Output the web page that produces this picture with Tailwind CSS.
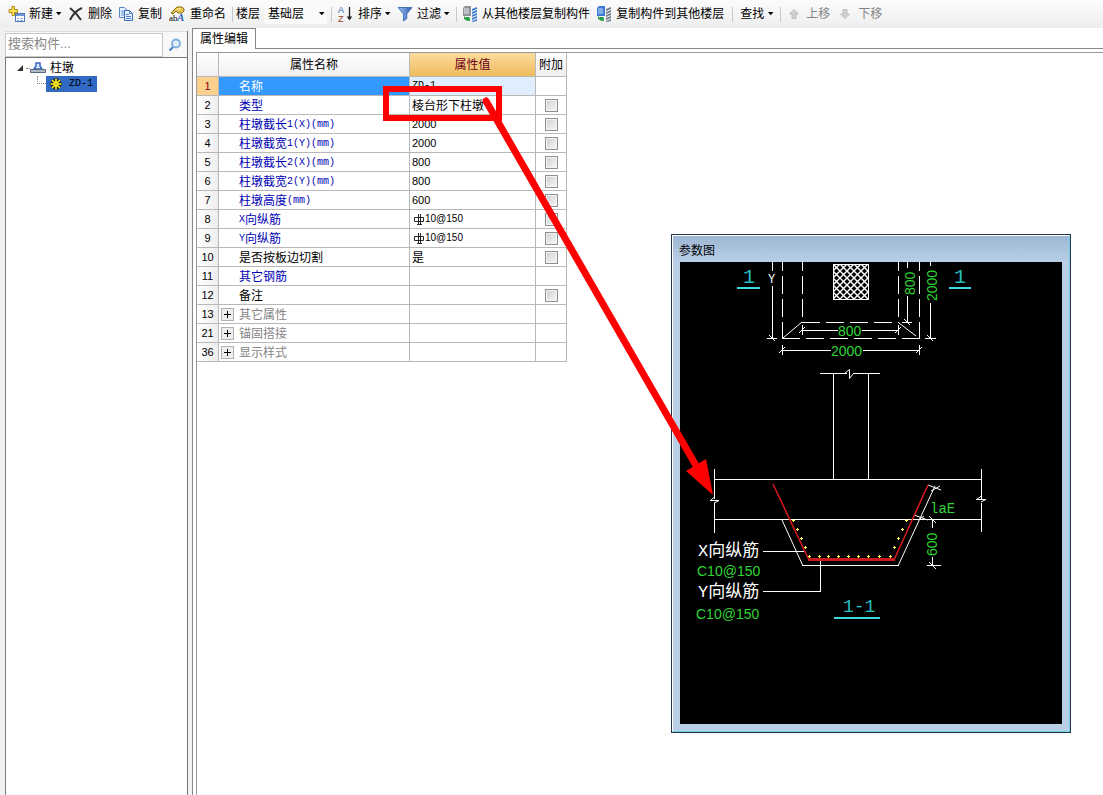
<!DOCTYPE html>
<html lang="zh-CN">
<head>
<meta charset="utf-8">
<title>属性编辑</title>
<script src="https://cdn.jsdelivr.net/npm/@tailwindcss/browser@4"></script>
</head>
<body class="relative flex h-screen flex-col overflow-hidden bg-[#f1f1f1] font-['Liberation_Sans','Noto_Sans_CJK_SC',sans-serif] text-[12px] leading-4 text-black">

<!-- Toolbar -->
<header class="flex h-7 shrink-0 items-center whitespace-nowrap bg-linear-to-b from-[#fcfcfc] to-[#eeeeee] pl-2">
  <button class="flex items-center">
    <svg class="mr-1 size-[17px]" viewBox="0 0 17 17"><rect x="7.500" y="7.500" width="9" height="8" fill="#fff" stroke="#5277b8"/><path d="M8 8h8v2H8z" fill="#6d94d8"/><path d="M9 12h2v1H9zM12 12h3v1h-3zM9 14h2v1H9zM12 14h3v1h-3z" fill="#8fb0e0"/><path d="M4 .5h2.500v3h3v3h-3v3H4v-3H1v-3h3z" fill="#ffe25a" stroke="#ad8b18"/></svg>
    新建
    <svg class="ml-0.5 h-1 w-[7px]" viewBox="0 0 7 4"><path d="M1 0h5.500L3.700 3.200z"/></svg>
  </button>
  <button class="ml-1.5 flex items-center"><svg class="mr-1 size-4" viewBox="0 0 16 16"><path d="M2 2c4 3 8 7 11 12M14 2C9 4 5 8 2 14" fill="none" stroke="#333" stroke-width="2"/></svg>删除</button>
  <button class="ml-1.5 flex items-center"><svg class="mr-1 size-4" viewBox="0 0 16 16"><path d="M1.500 1.500h5l3 3v7h-8z" fill="#e8f1ff" stroke="#5a86ca"/><path d="M3 5h4M3 7h3M3 9h3" stroke="#6b9ade"/><path d="M6.500 4.500h5l3 3v7h-8z" fill="#e4efff" stroke="#3e6cb8"/><path d="M11.500 4.500v3h3M8 8.500h3M8 10.500h5M8 12.500h5" fill="none" stroke="#4f83d0"/></svg>复制</button>
  <button class="ml-[7px] flex items-center"><svg class="mr-1 size-[17px] overflow-visible" viewBox="0 0 17 17"><path d="M5 4l3-3h5l2 2v2l-2 2H9L7 5 4 8 2 7z" fill="#e6c24e" stroke="#8e6b14"/><path d="M8 3h4" stroke="#fff2a8"/><g font-family="Liberation Serif"><text x="0" y="15" font-size="9">ab</text><text x="8" y="15" font-size="11" font-style="italic" font-weight="bold" fill="#2865b8">A</text></g></svg>重命名</button>
  <i class="ml-1.5 mr-[3px] h-[15px] w-px bg-[#c7c7c7]"></i>
  <label for="floor">楼层</label>
  <div class="relative ml-1 mr-1 flex h-5 items-center bg-[#fafafa]">
    <select id="floor" class="h-5 w-[63px] appearance-none bg-transparent pl-1"><option>基础层</option></select>
    <svg class="pointer-events-none absolute right-0.5 top-2 h-1 w-[7px]" viewBox="0 0 7 4"><path d="M1 0h5.500L3.700 3.200z"/></svg>
  </div>
  <i class="mr-[5px] h-[15px] w-px bg-[#c7c7c7]"></i>
  <button class="flex items-center">
    <svg class="mr-1 h-[18px] w-[17px]" viewBox="0 0 17 18"><g font-family="Liberation Sans" font-size="9"><text x="1" y="8" fill="#2869b5">A</text><text x="1" y="17" fill="#9a3a2c">Z</text></g><path d="M12.500 2v12" stroke="#222" stroke-width="1.300"/><path d="M9.800 11.500h5.400l-2.700 4z" fill="#222"/></svg>
    排序<svg class="ml-0.5 h-1 w-[7px]" viewBox="0 0 7 4"><path d="M1 0h5.500L3.700 3.200z"/></svg>
  </button>
  <button class="ml-1.5 flex items-center">
    <svg class="mr-1 size-4" viewBox="0 0 16 16"><defs><linearGradient id="fn"><stop stop-color="#9cc6f4"/><stop offset="1" stop-color="#2c5cae"/></linearGradient></defs><path d="M1 1.500h14L9.800 8v4.500L6.500 15V8z" fill="url(#fn)" stroke="#4674bd"/></svg>
    过滤<svg class="ml-0.5 h-1 w-[7px]" viewBox="0 0 7 4"><path d="M1 0h5.500L3.700 3.200z"/></svg>
  </button>
  <i class="ml-1.5 mr-[5px] h-[15px] w-px bg-[#c7c7c7]"></i>
  <button class="flex items-center"><svg class="mr-1 size-4" viewBox="0 0 16 16"><path d="M1 2l2-2h6v10H1z" fill="#8c9399"/><path d="M2 3h5M2 5h5M2 7h5" stroke="#e9edf0"/><path d="M10 3l5-2v2l-5 2zM10 6l5-2v2l-5 2zM10 9l5-2v2l-5 2zM10 12l5-2v2l-5 2zM10 15l5-2v2l-5 1z" fill="#3e7fd0"/><path d="M2 10l2 2v-1h3v3H4l-2-1z" fill="#229a42"/><path d="M4 15l4-4v4z" fill="#2eb050"/></svg>从其他楼层复制构件</button>
  <button class="ml-1.5 flex items-center"><svg class="mr-1 size-4" viewBox="0 0 16 16"><path d="M1 2l2-2h6v10H1z" fill="#3e79d0"/><path d="M2 3h5M2 5h5M2 7h5" stroke="#c9e0fa"/><path d="M10 3l5-2v2l-5 2zM10 6l5-2v2l-5 2zM10 9l5-2v2l-5 2zM10 12l5-2v2l-5 2zM10 15l5-2v2l-5 1z" fill="#727d88"/><path d="M2 10l2 2v-1h3v3H4l-2-1z" fill="#229a42"/><path d="M4 15l4-4v4z" fill="#2eb050"/></svg>复制构件到其他楼层</button>
  <i class="ml-2 mr-[7px] h-[15px] w-px bg-[#c7c7c7]"></i>
  <button class="flex items-center">查找<svg class="ml-[3px] h-1 w-[7px]" viewBox="0 0 7 4"><path d="M1 0h5.500L3.700 3.200z"/></svg></button>
  <i class="ml-1.5 mr-2 h-[15px] w-px bg-[#c7c7c7]"></i>
  <button class="flex items-center text-[#858585]"><svg class="mr-[7px] size-2.5" viewBox="0 0 10 10"><path d="M5 .5L9.500 5H7v4.500H3V5H.5z" fill="#d0d0d0" stroke="#bdbdbd"/></svg>上移</button>
  <button class="ml-2.5 flex items-center text-[#858585]"><svg class="mr-2 size-2.5" viewBox="0 0 10 10"><path d="M5 9.500L.5 5H3V.5h4V5h2.500z" fill="#d0d0d0" stroke="#bdbdbd"/></svg>下移</button>
</header>

<main class="flex min-h-0 flex-1">
  <!-- Component tree -->
  <aside class="ml-[5px] mt-[3px] flex w-[183px] shrink-0 flex-col border-r border-[#777] bg-white">
    <div class="flex h-[26px] items-center border-t border-[#ddd] bg-[#f8f8f8]">
      <input aria-label="搜索构件" placeholder="搜索构件..." class="h-6 w-[158px] border border-[#c8c8c8] bg-white px-0.5 pb-0.5 text-[13px] placeholder:text-[#888]">
      <button aria-label="搜索" class="flex flex-1 justify-center"><svg class="size-4" viewBox="0 0 16 16"><circle cx="9" cy="6.500" r="4" fill="#dceffd" stroke="#7eaddb" stroke-width="1.800"/><path d="M6 10l-3.500 3.500" stroke="#4d80c2" stroke-width="2.200"/></svg></button>
    </div>
    <ul class="flex-1 border-l border-t border-[#777] pt-0.5">
      <li class="flex h-4 items-center pl-2.5">
        <svg class="size-2" viewBox="0 0 8 8"><path d="M7 1v6H1z" fill="#333"/></svg>
        <i class="ml-0.5 w-1 border-t border-dotted border-[#888]"></i>
        <svg class="mr-1 h-3 w-4" viewBox="0 0 16 12"><path d="M6 1h4v3l2 3H4l2-3z" fill="#dbe8ff" stroke="#356bc4" stroke-width="1.500"/><path d="M.5 7.500h15v3H.5z" fill="#aebac8" stroke="#59697d"/></svg>
        柱墩
      </li>
      <li class="flex h-4 items-stretch pl-[31px]">
        <i class="mb-2 w-[9px] border-b border-l border-dotted border-[#888]"></i>
        <span class="flex items-center bg-[#316ac5] pl-1 pr-1 font-['Liberation_Mono',monospace] text-[10px]">
          <svg class="mr-[7px] size-3" viewBox="0 0 12 12"><path d="M6 0v12M0 6h12M2 2l8 8M10 2l-8 8" stroke="#111" stroke-width="3"/><path d="M6 .5v11M.5 6h11M2 2l8 8M10 2l-8 8" stroke="#ffee22" stroke-width="1.700"/><circle cx="6" cy="6" r="2.500" fill="#ffee22"/><path d="M5.500 5.500h1v1h-1z" fill="#333"/></svg>ZD-1
        </span>
      </li>
    </ul>
  </aside>

  <!-- Property editor -->
  <section class="ml-1 flex min-w-0 flex-1 flex-col border-l border-[#888] bg-white">
    <div role="tablist" class="flex h-[21px] shrink-0">
      <button role="tab" aria-selected="true" class="border-r border-t border-[#888] px-[7px]">属性编辑</button>
      <div class="flex-1 border-b border-[#888]"></div>
    </div>
    <div class="ml-[3px] mt-[3px] flex-1 border-l border-t border-[#999]">
      <table class="table-fixed border-separate border-spacing-0 text-[12px] leading-4">
        <colgroup><col class="w-[22px]"><col class="w-[191px]"><col class="w-[126px]"><col class="w-[31px]"></colgroup>
        <thead>
          <tr class="h-6 bg-linear-to-b from-white to-[#efefef] [&>th]:border-b [&>th]:border-r [&>th]:border-[#b8b8b8] [&>th]:p-0 [&>th]:font-normal">
            <th></th><th>属性名称</th><th class="bg-linear-to-b from-[#fbdc9c] to-[#efbb5c] text-[#6b0020]">属性值</th><th>附加</th>
          </tr>
        </thead>
        <tbody id="rows"></tbody>
      </table>
    </div>
  </section>
</main>

<!-- Parameter drawing window -->
<div role="dialog" aria-label="参数图" class="absolute left-[671px] top-[234px] flex w-[400px] flex-col border border-[#263448] bg-[#b9cfe6]">
  <div class="flex flex-col border border-l-white border-t-white border-b-[#6fd3e8] border-r-[#6fd3e8] px-[7px] pb-[7px]">
    <h2 class="-mx-[7px] flex h-[26px] items-center bg-linear-to-b from-[#9db6d3] to-[#b9cfe8] px-[6px] pt-1">参数图</h2>
    <svg class="block h-[462px] w-[382px] bg-black" viewBox="680 262 382 462" shape-rendering="crispEdges" font-family="'Liberation Sans','Noto Sans CJK SC',sans-serif">
      <defs>
        <pattern id="hatch" x="833" y="264" width="7" height="7" patternUnits="userSpaceOnUse"><path d="M0 0l7 7M7 0L0 7" stroke="#fff" stroke-width="1.400" shape-rendering="auto"/></pattern>
        <marker id="bar" markerUnits="userSpaceOnUse" markerWidth="3" markerHeight="3" refX="1.500" refY="1.500"><path d="M1 0h1v1h1v1H2v1H1V2H0V1h1z" fill="#ffff45"/></marker>
      </defs>
      <g fill="none" stroke="#fff">
        <rect x="833.500" y="264.500" width="35" height="35" fill="url(#hatch)"/>
        <path d="M782.500 262v76M919.500 262v76M802.500 262v60M898.500 262v60" stroke-dasharray="18 5" stroke-dashoffset="9"/>
        <path d="M782 338.500h138M802 322.500h97" stroke-dasharray="18 6"/>
        <path d="M783 338l19-16M899 323l17 13" shape-rendering="auto"/>
        <path d="M772.500 262v9M772.500 286v52M767 338.500h10M907.500 262v6M907.500 296v26M902 322.500h10M930.500 262v4M930.500 303v35M925 338.500h11"/>
        <path d="M802 330.500h36M862 330.500h37M802.500 325v10M898.500 325v10M782 350.500h49M863 350.500h57M782.500 345v10M919.500 345v10"/>
        <path d="M769 335l6 6M904 319l6 6M927 335l6 6M799 333l6-6M895 333l6-6M779 353l6-6M916 353l6-6" shape-rendering="auto"/>
        <path d="M820 373.500h27M853 373.500h27M833.500 374v105M868.500 374v105M714 479.500h268M714 519.500h268M714.500 469v30M714.500 503v30M981.500 469v30M981.500 503v29"/>
        <path d="M844.500 373.500l5-4v9l4-5M710 500.500h9l-5 2.500M714.500 497l-4 3.500M976 499.500h10l-5 2.500M981.500 496l-5 3.500M782 520l21 46M898 566l37-80M928 485l13 5M931 491l9-5M914 515l14 5M918 520l6-4" shape-rendering="auto"/>
        <path d="M802 565.500h97M932.500 519v9M932.500 557v9M927 565.500h14M763 551.500h41M763 591.500h57.500V558"/>
        <path d="M929 516l7 7M929 562l7 7" shape-rendering="auto"/>
      </g>
      <path d="M773 484l35 74 1 2h85l34-75" fill="none" stroke="#d9191d" stroke-width="1.500" shape-rendering="auto"/>
      <path d="M808 559.500h87" stroke="#c9191d" stroke-width="3"/>
      <polyline fill="none" stroke="none" marker-start="url(#bar)" marker-mid="url(#bar)" marker-end="url(#bar)" points="793.500,520.500 797.500,529.500 801.500,538.500 805.500,547.500 809.500,556.500 819.500,556.500 828.500,556.500 838.500,556.500 848.500,556.500 858.500,556.500 868.500,556.500 879.500,556.500 890.500,556.500 894.500,547.500 898.500,538.500 902.500,529.500 906.500,520.500"/>
      <path d="M737 288h23M949 288h22M834 618h46" stroke="#3fd8dc" stroke-width="2"/>
      <g fill="#25bfc0" font-family="'Liberation Mono',monospace" font-size="20"><text x="743" y="283">1</text><text x="954" y="283">1</text><text x="843" y="612" font-size="18">1-1</text></g>
      <g fill="#2fd534" font-size="14">
        <text x="838" y="336">800</text><text x="831" y="356">2000</text>
        <text x="697" y="576">C10@150</text><text x="696" y="619">C10@150</text>
        <text x="930" y="513" font-family="'Liberation Mono',monospace">laE</text>
        <text transform="translate(915 295) rotate(-90)">800</text>
        <text transform="translate(937 301) rotate(-90)">2000</text>
        <text transform="translate(937 556) rotate(-90)">600</text>
      </g>
      <g fill="#fff" font-size="17"><text x="698" y="556"><tspan font-family="'Liberation Mono',monospace">X</tspan>向纵筋</text><text x="698" y="597"><tspan font-family="'Liberation Mono',monospace">Y</tspan>向纵筋</text><text x="768" y="283" font-size="12" font-family="'Liberation Mono',monospace">Y</text></g>
    </svg>
  </div>
</div>

<!-- Callout from the type field to the drawing -->
<svg class="pointer-events-none absolute left-0 top-0 h-[795px] w-[1103px]" viewBox="0 0 1103 795" aria-hidden="true">
  <rect x="386" y="89" width="113" height="29" fill="none" stroke="#f00" stroke-width="6"/>
  <path d="M486 101L698 469" stroke="#f00" stroke-width="7" stroke-linecap="round"/>
  <path d="M713 495l-27-24 20-12z" fill="#f00"/>
</svg>

<script>
const rows = [
  [1,'名称','','ZD-1',0],[2,'类型','','棱台形下柱墩',1],[3,'柱墩截长','1(X)(mm)','2000',1],[4,'柱墩截宽','1(Y)(mm)','2000',1],
  [5,'柱墩截长','2(X)(mm)','800',1],[6,'柱墩截宽','2(Y)(mm)','800',1],[7,'柱墩高度','(mm)','600',1],
  [8,'X向纵筋','','10@150',1],[9,'Y向纵筋','','10@150',1],[10,'是否按板边切割','','是',1],[11,'其它钢筋','','',0],[12,'备注','','',1],
  [13,'其它属性','','',0],[21,'锚固搭接','','',0],[36,'显示样式','','',0]
];
const rebar = '<svg class="ml-0.5 size-[11px]" viewBox="0 0 11 11"><path d="M.5 3.500h9v4h-9zM4.500 0v10M6.500 0v10M3 10.500h5" fill="none" stroke="#111" stroke-width=".9"/></svg>';
const mono = "font-['Liberation_Mono',monospace] text-[10px]";
document.getElementById('rows').innerHTML = rows.map(([n,name,unit,val,check]) => {
  const sel = n === 1, group = n > 12;
  const color = sel ? 'bg-[#3399ff] text-white' : group ? 'text-[#858585]' : (n === 10 || n === 12) ? 'text-black' : 'text-[#0000b4]';
  const first = /^[XY]/.test(name) ? `<span class="${mono}">${name[0]}</span><span>${name.slice(1)}</span>` : `<span>${name}</span>`;
  const value = n === 1 ? `<span class="${mono}">${val}</span>` : (n === 8 || n === 9) ? `${rebar}<span class="text-[10px]">${val}</span>` : /^\d/.test(val) ? `<span class="text-[11px]">${val}</span>` : `<span class="pt-px">${val}</span>`;
  return `<tr class="h-[19px] [&>*]:border-b [&>*]:border-r [&>*]:border-[#b8b8b8] [&>*]:py-0">
    <th scope="row" class="px-0 text-[11px] font-normal ${sel ? 'bg-[#fbd08c] text-[#8a0020]' : 'bg-linear-to-r from-white to-[#eeeeee]'}">${n}</th>
    <td class="px-0 ${color}"><div class="flex h-[18px] items-center ${group ? 'pl-0.5' : 'pl-5'}">${group ? `<button aria-label="展开${name}" class="mr-[5px] flex size-[13px] items-center justify-center border border-[#b0b0b0] bg-[#eeeeee]"><svg class="size-[7px]" viewBox="0 0 7 7"><path d="M3.500 0v7M0 3.500h7" stroke="#000"/></svg></button>` : ''}<span class="flex items-center pt-0.5">${first}${unit ? `<span class="${mono}">${unit}</span>` : ''}</span></div></td>
    <td class="px-0.5 ${sel ? 'bg-[#dfedfc]' : ''}"><div class="flex h-[18px] items-center">${value}</div></td>
    <td class="px-0"><div class="flex h-[18px] items-center justify-center">${check ? `<input type="checkbox" aria-label="附加${name}${unit}" class="size-[13px] appearance-none border border-[#8e8f8f] bg-linear-to-br from-[#cdd0d3] to-[#f8f8f8] shadow-[inset_0_0_0_1px_#f4f4f4]">` : ''}</div></td>
  </tr>`;
}).join('');
</script>
</body>
</html>
